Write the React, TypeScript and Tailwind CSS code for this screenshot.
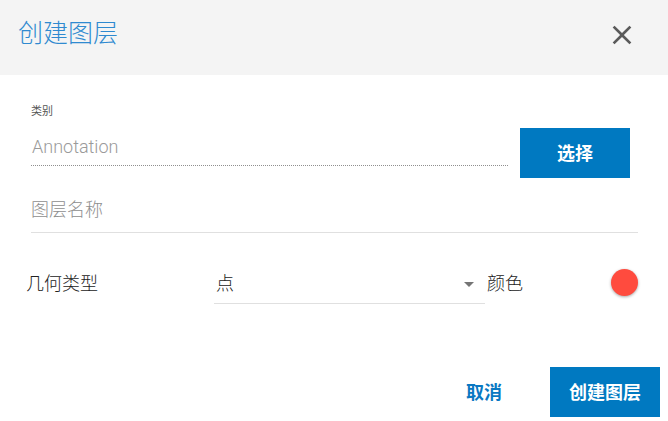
import { useState } from "react";

const FONT = "font-['Roboto','Noto_Sans_CJK_SC',sans-serif]";

function CloseIcon() {
  return (
    <svg width="32" height="32" viewBox="0 0 24 24" className="fill-[#5a5a5a]">
      <path d="M19 6.41L17.59 5 12 10.59 6.41 5 5 6.41 10.59 12 5 17.59 6.41 19 12 13.41 17.59 19 19 17.59 13.41 12z" />
    </svg>
  );
}

export default function App() {
  const [color] = useState("#ff4b3e");

  return (
    <div className={`${FONT} w-[668px] h-[421px] bg-white overflow-hidden`}>
      {/* header */}
      <div className="h-[75px] bg-[#f4f4f4] flex justify-between items-start pl-[18px] pr-[30px]">
        <h1 className="mt-[18px] text-[25px] leading-[32px] font-light text-[#2f8ad0]">
          创建图层
        </h1>
        <button type="button" className="mt-[19px]">
          <CloseIcon />
        </button>
      </div>

      {/* body */}
      <div className="pl-[31px] pr-[30px] pt-[29px]">
        <div className="flex items-start">
          <div className="flex-1">
            <div className="text-[11px] leading-[16px] text-[#555]">类别</div>
            <div className="pt-[15px] pb-[6px] text-[18px] leading-[24px] font-light text-[#9a9a9a] border-b border-dotted border-[#8f8f8f] pl-[1px]">
              Annotation
            </div>
          </div>
          <button
            type="button"
            className="ml-[12px] mr-[8px] mt-[24px] w-[110px] h-[50px] bg-[#0079c1] text-white text-[18px] font-bold"
          >
            选择
          </button>
        </div>

        <div className="pt-[20px] pb-[10px] text-[18px] leading-[24px] font-light text-[#8e8e8e] border-b border-[#e0e0e0]">
          图层名称
        </div>

        <div className="mt-[36px] flex items-start">
          <div className="ml-[-5px] w-[188px] mt-[3px] text-[18px] leading-[24px] font-light text-[#222]">
            几何类型
          </div>
          <div className="relative w-[271px] mt-[3px] pl-[2px] pb-[7px] text-[18px] leading-[24px] font-light text-[#222] border-b border-[#e0e0e0]">
            点
            <span className="absolute right-[11px] top-[10px] w-0 h-0 border-l-[5px] border-r-[5px] border-t-[5px] border-l-transparent border-r-transparent border-t-[#757575]" />
          </div>
          <div className="ml-[2px] mt-[3px] text-[18px] leading-[24px] font-light text-[#222]">颜色</div>
          <div className="flex-1" />
          <div
            className="w-[27px] h-[27px] rounded-full shadow-[0_1px_3px_rgba(0,0,0,0.35)]"
            style={{ backgroundColor: color }}
          />
        </div>
      </div>

      {/* footer */}
      <div className="mt-[63px] flex justify-end items-center pr-[8px]">
        <button
          type="button"
          className="mr-[32px] h-[50px] px-[16px] text-[18px] font-bold text-[#0a78c2]"
        >
          取消
        </button>
        <button
          type="button"
          className="w-[110px] h-[50px] bg-[#0079c1] text-white text-[18px] font-bold"
        >
          创建图层
        </button>
      </div>
    </div>
  );
}
